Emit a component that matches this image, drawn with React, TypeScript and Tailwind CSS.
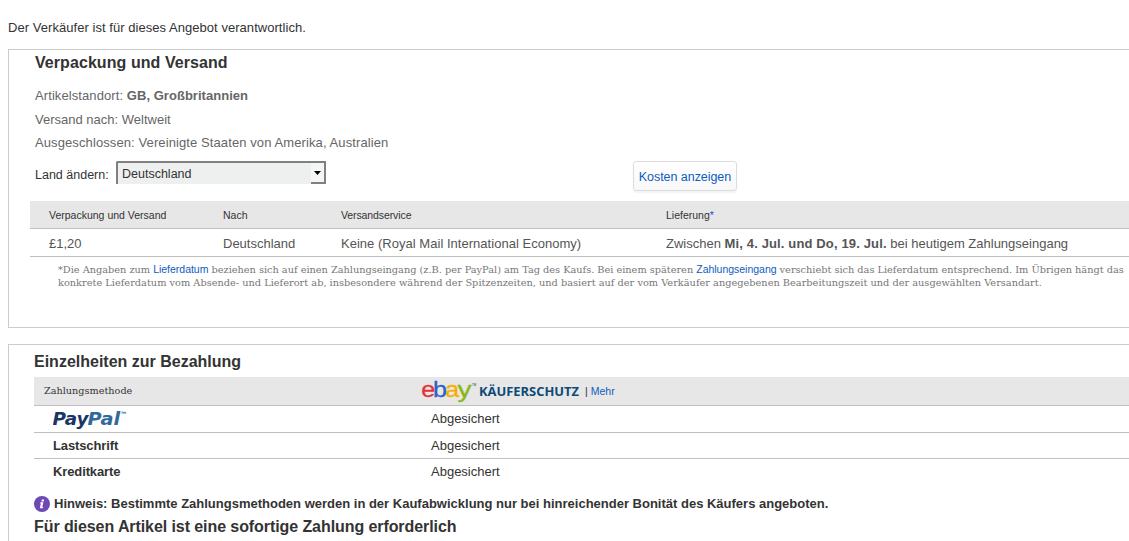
import type { ReactNode } from "react";

type PaymentMethod = {
  name: string;
  label: ReactNode;
  status: string;
};

const SHIPPING_INFO = [
  {
    label: "Artikelstandort:",
    value: "GB, Großbritannien",
    labelClass: "tracking-[0.09px]",
    valueClass: "font-bold tracking-[0.03px]",
  },
  {
    label: "Versand nach:",
    value: "Weltweit",
    labelClass: "",
    valueClass: "",
  },
  {
    label: "Ausgeschlossen:",
    value: "Vereinigte Staaten von Amerika, Australien",
    labelClass: "tracking-[0.1px]",
    valueClass: "",
  },
];

const PAYMENT_METHODS: PaymentMethod[] = [
  { name: "paypal", label: <PayPalLogo />, status: "Abgesichert" },
  { name: "lastschrift", label: "Lastschrift", status: "Abgesichert" },
  { name: "kreditkarte", label: "Kreditkarte", status: "Abgesichert" },
];

export default function App() {
  return (
    <main className="h-[541px] w-full overflow-hidden bg-white pl-2 font-['Liberation_Sans',Arial,sans-serif] text-[13px] text-[#333]">
      <p className="h-[49px] pt-5 leading-4 tracking-[0.045px]">
        Der Verkäufer ist für dieses Angebot verantwortlich.
      </p>
      <ShippingPanel />
      <PaymentPanel />
    </main>
  );
}

function ShippingPanel() {
  return (
    <section className="h-[279px] border-y border-l border-[#ccc]">
      <h2 className="pt-1 pl-[26px] text-base leading-[18px] font-bold tracking-[0.07px]">
        Verpackung und Versand
      </h2>

      <div className="mt-3 pl-[26px] leading-[23.5px] text-[#666]">
        {SHIPPING_INFO.map((row) => (
          <p key={row.label} className={row.labelClass}>
            {row.label} <span className={row.valueClass}>{row.value}</span>
          </p>
        ))}
      </div>

      <div className="mt-[6.5px] flex h-10 items-start pl-[26px]">
        <span className="w-[81px] pt-[6px] text-[12.5px] leading-4">
          Land ändern:
        </span>
        <CountrySelect value="Deutschland" />
        <button
          type="button"
          className="ml-[307px] h-[30px] w-[104px] rounded-[3px] border border-[#ddd] bg-gradient-to-b from-white to-[#f8f8f8] pt-[2px] text-[12.5px] tracking-[-0.05px] whitespace-nowrap text-[#0f5cc0] shadow-[0_2px_2px_rgba(0,0,0,0.05)]"
        >
          Kosten anzeigen
        </button>
      </div>

      <div className="ml-[21px]">
        <div className="grid h-7 grid-cols-[174px_118px_325px_1fr] items-center border-b border-[#c0c0c0] bg-[#e7e7e7] pt-[2px] pl-[19px] text-[10.5px]">
          <span>Verpackung und Versand</span>
          <span>Nach</span>
          <span className="tracking-[-0.1px]">Versandservice</span>
          <span>
            Lieferung<span className="text-[#0f5cc0]">*</span>
          </span>
        </div>
        <div className="grid h-7 grid-cols-[174px_118px_325px_1fr] items-center border-b border-[#c0c0c0] pt-[2px] pl-[19px] text-[#555]">
          <span>£1,20</span>
          <span>Deutschland</span>
          <span className="tracking-[0.025px]">
            Keine (Royal Mail International Economy)
          </span>
          <span>
            Zwischen{" "}
            <b className="tracking-[0.14px]">Mi, 4. Jul. und Do, 19. Jul.</b>{" "}
            bei heutigem Zahlungseingang
          </span>
        </div>
        <p className="pt-[6px] pl-7 font-['DejaVu_Serif',serif] text-[9.79px] leading-[13px] whitespace-nowrap text-[#777]">
          <span className="tracking-[-0.02px]">
            *Die Angaben zum <FootnoteLink>Lieferdatum</FootnoteLink> beziehen
            sich auf einen Zahlungseingang (z.B. per PayPal) am Tag des Kaufs.
            Bei einem späteren <FootnoteLink>Zahlungseingang</FootnoteLink>{" "}
            verschiebt sich das Lieferdatum entsprechend. Im Übrigen hängt das
          </span>
          <br />
          konkrete Lieferdatum vom Absende- und Lieferort ab, insbesondere
          während der Spitzenzeiten, und basiert auf der vom Verkäufer
          angegebenen Bearbeitungszeit und der ausgewählten Versandart.
        </p>
      </div>
    </section>
  );
}

function PaymentPanel() {
  return (
    <section className="mt-4 h-[220px] border-t border-l border-[#ccc] pl-[25px]">
      <h2 className="h-8 pt-2 text-base leading-[18px] font-bold">
        Einzelheiten zur Bezahlung
      </h2>

      <div className="grid h-[29px] grid-cols-[378px_1fr] items-center border-b border-[#c0c0c0] bg-[#e7e7e7] pl-[10px]">
        <span className="font-['DejaVu_Serif',serif] text-[9.7px]">
          Zahlungsmethode
        </span>
        <div className="-ml-[9px] flex items-center text-[10.5px]">
          <BuyerProtectionLogo />
          <span className="ml-[5px] pt-[2px]">|</span>
          <a href="#" className="ml-[3px] pt-[2px] text-[#0f5cc0]">
            Mehr
          </a>
        </div>
      </div>

      {PAYMENT_METHODS.map((method) => (
        <div
          key={method.name}
          className="grid h-[26.5px] grid-cols-[378px_1fr] items-center border-b border-[#c0c0c0] pl-[19px] last-of-type:border-b-0 last-of-type:pb-[2px]"
        >
          <span className="font-bold tracking-[-0.12px]">{method.label}</span>
          <span>{method.status}</span>
        </div>
      ))}

      <p className="mt-[10px] flex h-4 items-center gap-1 font-bold whitespace-nowrap">
        <InfoIcon />
        Hinweis: Bestimmte Zahlungsmethoden werden in der Kaufabwicklung nur bei
        hinreichender Bonität des Käufers angeboten.
      </p>
      <h2 className="mt-[6px] text-base leading-[18px] font-bold tracking-[-0.08px]">
        Für diesen Artikel ist eine sofortige Zahlung erforderlich
      </h2>
    </section>
  );
}

function FootnoteLink({ children }: { children: ReactNode }) {
  return (
    <a
      href="#"
      className="font-['Liberation_Sans',Arial,sans-serif] text-[10.5px] leading-3 tracking-[-0.02px] text-[#0f5cc0]"
    >
      {children}
    </a>
  );
}

/** Old-style inset select with a raised arrow button. */
function CountrySelect({ value }: { value: string }) {
  return (
    <button
      type="button"
      className="flex h-[23px] w-[210px] items-stretch rounded-tl-[2px] border-t-2 border-l-2 border-[#808080] bg-[#eef0f0] text-left"
    >
      <span className="flex-1 pt-[3px] pl-1 text-[12.5px] leading-4">
        {value}
      </span>
      <span className="flex w-[15px] items-center justify-center border-r-2 border-b-2 border-[#808080] bg-[#f4f5f5]">
        <svg width="7" height="4" viewBox="0 0 7 4" aria-hidden="true">
          <path d="M0 0H7L3.5 4Z" fill="#000" />
        </svg>
      </span>
    </button>
  );
}

function PayPalLogo() {
  return (
    <svg
      width="80"
      height="24"
      viewBox="0 0 80 24"
      aria-label="PayPal"
      className="block font-['DejaVu_Sans',sans-serif] font-bold tracking-normal italic"
    >
      <text
        x="-0.5"
        y="18"
        fontSize="18"
        textLength="36"
        lengthAdjust="spacingAndGlyphs"
        fill="#1a3665"
      >
        Pay
      </text>
      <text
        x="34.5"
        y="18"
        fontSize="18"
        textLength="32.5"
        lengthAdjust="spacingAndGlyphs"
        fill="#32689a"
      >
        Pal
      </text>
      <text x="68" y="7" fontSize="3" fill="#32689a">
        TM
      </text>
    </svg>
  );
}

const EBAY_LETTERS = [
  { char: "e", x: 8.3, width: 14, color: "#e53238" },
  { char: "b", x: 20, width: 14, color: "#2a62c4" },
  { char: "a", x: 32.2, width: 14, color: "#f5af02" },
  { char: "y", x: 44.5, width: 14, color: "#86b817" },
];

function BuyerProtectionLogo() {
  return (
    <svg
      width="167"
      height="28"
      viewBox="0 0 167 28"
      aria-label="ebay Käuferschutz"
      className="block"
    >
      <g fontFamily="Liberation Sans" fontSize="22" strokeWidth="0.3">
        {EBAY_LETTERS.map((letter) => (
          <text
            key={letter.char}
            x={letter.x}
            y="19.5"
            textLength={letter.width}
            lengthAdjust="spacingAndGlyphs"
            fill={letter.color}
            stroke={letter.color}
          >
            {letter.char}
          </text>
        ))}
      </g>
      <text x="59" y="8.5" fontSize="3" fill="#333">
        TM
      </text>
      <text
        x="66"
        y="19"
        fontFamily="Open Sans"
        fontSize="12"
        fontWeight="700"
        textLength="100"
        lengthAdjust="spacingAndGlyphs"
        fill="#0d4a77"
      >
        KÄUFERSCHUTZ
      </text>
    </svg>
  );
}

function InfoIcon() {
  return (
    <svg width="16" height="16" viewBox="0 0 16 16" aria-hidden="true">
      <circle cx="8" cy="8" r="8" fill="#6e48b4" />
      <path d="M7.9 3.5h2.3l-.5 2H7.4z" fill="#fff" />
      <path d="M6.4 6.3h3L8.3 11h.9l-.3 1.3H5.8L6.9 7.6h-.8z" fill="#fff" />
    </svg>
  );
}
